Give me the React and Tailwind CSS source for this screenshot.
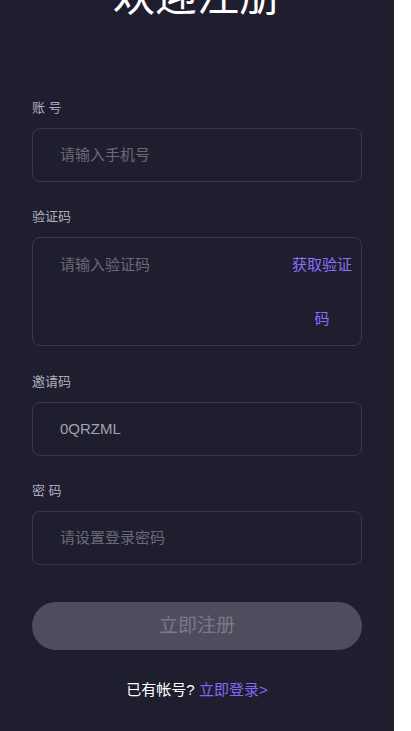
import React from "react";

const font = { fontFamily: '"Liberation Sans", "Noto Sans CJK SC", sans-serif' };

function Label({ children }) {
  return <div className="text-[13px] leading-[20px] text-[#aeadbd] mb-[10px]">{children}</div>;
}

function Field({ label, placeholder, value, className = "" }) {
  return (
    <div className={className}>
      <Label>{label}</Label>
      <div className="border border-[#393850] rounded-[8px] h-[54px] flex items-center pl-[27px]">
        <input
          readOnly
          defaultValue={value}
          placeholder={placeholder}
          className="bg-transparent outline-none w-full text-[15px] text-[#a3a2b0] placeholder:text-[#6a6979]"
          style={font}
        />
      </div>
    </div>
  );
}

export default function App() {
  return (
    <div className="w-[394px] h-[731px] overflow-hidden bg-[#1f1e2f] px-8" style={font}>
      <h1 className="mt-[-24px] text-center text-[42px] leading-[42px] text-white">欢迎注册</h1>

      <Field className="mt-[80px]" label="账 号" placeholder="请输入手机号" />

      <div className="mt-[25px]">
        <Label>验证码</Label>
        <div className="border border-[#393850] rounded-[8px] flex items-start pl-[27px] pr-[8px]">
          <input
            readOnly
            placeholder="请输入验证码"
            className="bg-transparent outline-none flex-1 min-w-0 h-[53.5px] text-[15px] text-[#a3a2b0] placeholder:text-[#6a6979]"
            style={font}
          />
          <div className="w-[62px] text-center text-[15px] leading-[53.5px] text-[#8a6ff7]">获取验证码</div>
        </div>
      </div>

      <Field className="mt-[26px]" label="邀请码" value="0QRZML" />

      <Field className="mt-[25px]" label="密 码" placeholder="请设置登录密码" />

      <div className="mt-[37px] h-[48px] rounded-full bg-[#4f4c5d] flex items-center justify-center text-[19px] text-[#7c7a8a]">
        立即注册
      </div>

      <div className="mt-[30px] text-center text-[15px] leading-[20px]">
        <span className="text-white">已有帐号? </span>
        <span className="text-[#8468f5]">立即登录&gt;</span>
      </div>
    </div>
  );
}
